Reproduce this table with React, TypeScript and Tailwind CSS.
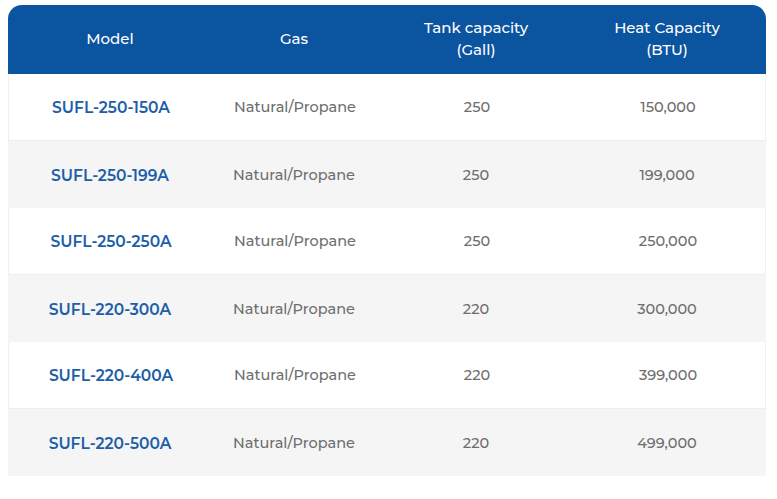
const ROWS = [
  { model: 'SUFL-250-150A', gas: 'Natural/Propane', tank: '250', heat: '150,000' },
  { model: 'SUFL-250-199A', gas: 'Natural/Propane', tank: '250', heat: '199,000' },
  { model: 'SUFL-250-250A', gas: 'Natural/Propane', tank: '250', heat: '250,000' },
  { model: 'SUFL-220-300A', gas: 'Natural/Propane', tank: '220', heat: '300,000' },
  { model: 'SUFL-220-400A', gas: 'Natural/Propane', tank: '220', heat: '399,000' },
  { model: 'SUFL-220-500A', gas: 'Natural/Propane', tank: '220', heat: '499,000' },
]

const COLS = 'grid grid-cols-[204px_164px_200px_182px] pr-[8px]'

export default function App() {
  return (
    <div className="min-h-[499px] w-[777px] bg-white pt-[5px] pl-[8px] font-['Montserrat','Inter',sans-serif]">
      <div className="w-[758px]">
        <div className={`${COLS} h-[69px] items-center rounded-t-[14px] bg-[#0b54a0] pb-[2px] text-center text-[15px] font-medium leading-[22px] text-white`}>
          <div>Model</div>
          <div>Gas</div>
          <div>
            Tank capacity
            <br />
            (Gall)
          </div>
          <div>
            Heat Capacity
            <br />
            (BTU)
          </div>
        </div>
        {ROWS.map((row, i) => (
          <div
            key={row.model}
            className={`${COLS} h-[67px] items-center pt-[2px] text-center text-[14.5px] ${
              i % 2 === 0 ? 'border-x border-b border-[#efefef] bg-white' : 'bg-[#f5f5f5]'
            }`}
          >
            <div className="text-[15.5px] font-semibold text-[#1d5ea8]">{row.model}</div>
            <div className="font-medium text-[#6e6e6e]">{row.gas}</div>
            <div className="font-medium text-[#6e6e6e]">{row.tank}</div>
            <div className="font-medium text-[#6e6e6e]">{row.heat}</div>
          </div>
        ))}
      </div>
    </div>
  )
}
